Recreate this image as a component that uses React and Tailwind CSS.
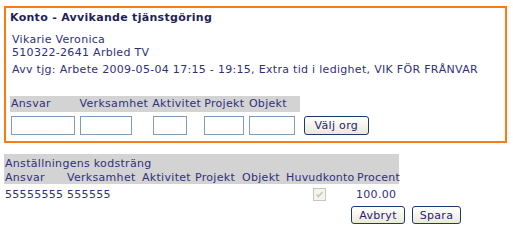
import React from "react";

const headCell = "bg-[#d3d3d3] text-left font-normal p-0 pl-[1px] h-[16px] leading-[16px] overflow-hidden whitespace-nowrap";
const inputCls = "block h-[19px] border border-[#7f9db9] bg-white";
const btnCls =
  "h-[18px] rounded-[3px] border border-[#1c3a6e] bg-gradient-to-b from-white to-[#ece9d8] text-[#1f1f70] leading-[15px] tracking-[0.3px]";
const colHead = "text-left font-normal p-0 pl-[1px] whitespace-nowrap";

const App = () => {
  return (
    <div className="w-[513px] h-[234px] bg-white px-[4px] pt-[6px] font-['DejaVu_Sans',Verdana,sans-serif] text-[11px] leading-[13px] tracking-[0.3px] text-[#30307c]">
      <section className="w-[503px] border-2 border-[#ff7a10] pl-[4px] pt-[3px] pb-[6px]">
        <h1 className="font-bold text-[11px] leading-[14px] text-[#1f1f5a]">
          Konto - Avvikande tjänstgöring
        </h1>
        <div className="mt-[8px] ml-[2px]">
          <p>Vikarie Veronica</p>
          <p>510322-2641 Arbled TV</p>
          <p className="mt-[4px]">
            Avv tjg: Arbete 2009-05-04 17:15 - 19:15, Extra tid i ledighet, VIK FÖR FRÅNVAR
          </p>
        </div>
        <table className="mt-[20px] w-[373px] table-fixed border-separate border-spacing-[2px_0]">
          <colgroup>
            <col className="w-[66px]" />
            <col className="w-[70px]" />
            <col className="w-[50px]" />
            <col className="w-[43px]" />
            <col className="w-[50px]" />
            <col className="w-[80px]" />
          </colgroup>
          <thead>
            <tr>
              <th className={headCell}>Ansvar</th>
              <th className={headCell}>Verksamhet</th>
              <th className={headCell}>Aktivitet</th>
              <th className={headCell}>Projekt</th>
              <th className={headCell}>Objekt</th>
              <th className="p-0"></th>
            </tr>
          </thead>
          <tbody>
            <tr>
              <td className="p-0 pt-[4px]"><input className={`${inputCls} w-[64px] ml-[1px]`} /></td>
              <td className="p-0 pt-[4px]"><input className={`${inputCls} w-[52px] ml-[1px]`} /></td>
              <td className="p-0 pt-[4px]"><input className={`${inputCls} w-[34px] ml-[2px]`} /></td>
              <td className="p-0 pt-[4px]"><input className={`${inputCls} w-[40px] ml-[1px]`} /></td>
              <td className="p-0 pt-[4px]"><input className={`${inputCls} w-[46px] ml-[1px]`} /></td>
              <td className="p-0 pt-[4px] pl-[4px]">
                <button className={`${btnCls} h-[19px] w-[65px]`}>Välj org</button>
              </td>
            </tr>
          </tbody>
        </table>
      </section>

      <table className="mt-[11px] w-[395px] table-fixed border-collapse">
        <colgroup>
          <col className="w-[62px]" />
          <col className="w-[75px]" />
          <col className="w-[53px]" />
          <col className="w-[47px]" />
          <col className="w-[44px]" />
          <col className="w-[71px]" />
          <col className="w-[43px]" />
        </colgroup>
        <thead className="bg-[#d3d3d3]">
          <tr>
            <th colSpan={7} className={`${colHead} pt-[2px] h-[16px]`}>
              Anställningens kodsträng
            </th>
          </tr>
          <tr>
            <th className={`${colHead} h-[14px]`}>Ansvar</th>
            <th className={colHead}>Verksamhet</th>
            <th className={colHead}>Aktivitet</th>
            <th className={colHead}>Projekt</th>
            <th className={colHead}>Objekt</th>
            <th className={`${colHead} tracking-[0.2px]`}>Huvudkonto</th>
            <th className={`${colHead} pl-0 tracking-[0.2px]`}>Procent</th>
          </tr>
        </thead>
        <tbody>
          <tr>
            <td className="p-0 pl-[1px] pt-[4px] align-top">55555555</td>
            <td className="p-0 pl-[1px] pt-[4px] align-top">555555</td>
            <td></td>
            <td></td>
            <td></td>
            <td className="p-0 pt-[4px]">
              <span className="ml-[28px] flex h-[13px] w-[13px] items-center justify-center border border-[#c9c7ba] bg-[#f4f3ee]">
                <svg viewBox="0 0 9 9" className="h-[9px] w-[9px]">
                  <path d="M1.5 4.5 L3.5 6.5 L7.5 2" fill="none" stroke="#c9c7ba" strokeWidth="1.6" />
                </svg>
              </span>
            </td>
            <td className="p-0 pt-[4px] pr-[6px] text-right align-top">100.00</td>
          </tr>
        </tbody>
      </table>

      <div className="mt-[5px] flex w-[457px] justify-end gap-[7px]">
        <button className={`${btnCls} w-[54px]`}>Avbryt</button>
        <button className={`${btnCls} w-[49px]`}>Spara</button>
      </div>
    </div>
  );
};

export default App;
